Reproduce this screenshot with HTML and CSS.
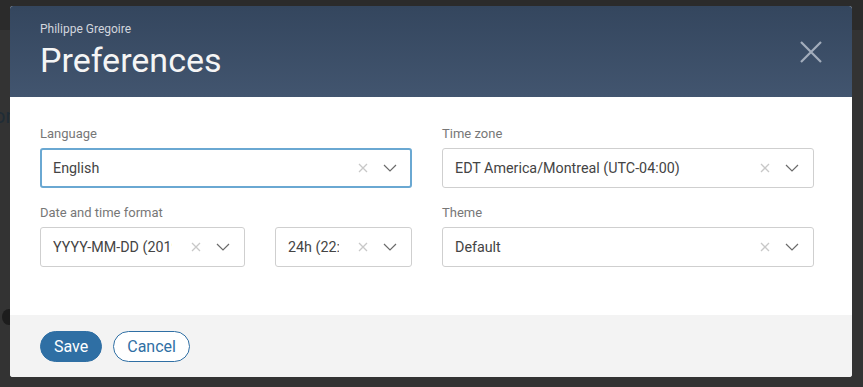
FILE: index.html
```html
<!DOCTYPE html>
<html>
<head>
<meta charset="utf-8">
<link rel="stylesheet" href="styles.css">
</head>
<body>
<div class="page">
  <div class="page-top"></div>
  <span class="bg-text">or</span>
  <span class="bg-dot"></span>
  <div class="modal">
    <header class="modal-header">
      <div class="titles">
        <div class="subtitle">Philippe Gregoire</div>
        <h1 class="title">Preferences</h1>
      </div>
      <button class="close" aria-label="Close">
        <svg width="24" height="24" viewBox="0 0 24 24"><path d="M2 2 L22 22 M22 2 L2 22" stroke="#a3adbc" stroke-width="2.2" fill="none"/></svg>
      </button>
    </header>
    <div class="modal-body">
      <div class="field">
        <label class="label">Language</label>
        <div class="select focused">
          <span class="value">English</span>
          <span class="icons">
            <svg class="clear" width="10" height="10" viewBox="0 0 10 10"><path d="M1 1 L9 9 M9 1 L1 9" stroke="#c8c8c8" stroke-width="1.3"/></svg>
            <svg class="chev" width="14" height="8" viewBox="0 0 14 8"><path d="M1 1 L7 7 L13 1" stroke="#6b6b6b" stroke-width="1.2" fill="none"/></svg>
          </span>
        </div>
      </div>
      <div class="field">
        <label class="label">Time zone</label>
        <div class="select">
          <span class="value">EDT America/Montreal (UTC-04:00)</span>
          <span class="icons">
            <svg class="clear" width="10" height="10" viewBox="0 0 10 10"><path d="M1 1 L9 9 M9 1 L1 9" stroke="#c8c8c8" stroke-width="1.3"/></svg>
            <svg class="chev" width="14" height="8" viewBox="0 0 14 8"><path d="M1 1 L7 7 L13 1" stroke="#6b6b6b" stroke-width="1.2" fill="none"/></svg>
          </span>
        </div>
      </div>
      <div class="field">
        <label class="label">Date and time format</label>
        <div class="pair">
          <div class="select">
            <span class="value">YYYY-MM-DD (2019-10-23)</span>
            <span class="icons">
              <svg class="clear" width="10" height="10" viewBox="0 0 10 10"><path d="M1 1 L9 9 M9 1 L1 9" stroke="#c8c8c8" stroke-width="1.3"/></svg>
              <svg class="chev" width="14" height="8" viewBox="0 0 14 8"><path d="M1 1 L7 7 L13 1" stroke="#6b6b6b" stroke-width="1.2" fill="none"/></svg>
            </span>
          </div>
          <div class="select short">
            <span class="value">24h (22:22)</span>
            <span class="icons">
              <svg class="clear" width="10" height="10" viewBox="0 0 10 10"><path d="M1 1 L9 9 M9 1 L1 9" stroke="#c8c8c8" stroke-width="1.3"/></svg>
              <svg class="chev" width="14" height="8" viewBox="0 0 14 8"><path d="M1 1 L7 7 L13 1" stroke="#6b6b6b" stroke-width="1.2" fill="none"/></svg>
            </span>
          </div>
        </div>
      </div>
      <div class="field">
        <label class="label">Theme</label>
        <div class="select">
          <span class="value">Default</span>
          <span class="icons">
            <svg class="clear" width="10" height="10" viewBox="0 0 10 10"><path d="M1 1 L9 9 M9 1 L1 9" stroke="#c8c8c8" stroke-width="1.3"/></svg>
            <svg class="chev" width="14" height="8" viewBox="0 0 14 8"><path d="M1 1 L7 7 L13 1" stroke="#6b6b6b" stroke-width="1.2" fill="none"/></svg>
          </span>
        </div>
      </div>
    </div>
    <footer class="modal-footer">
      <button class="btn primary">Save</button>
      <button class="btn outline">Cancel</button>
    </footer>
  </div>
</div>
</body>
</html>
```
FILE: styles.css
```css
* { box-sizing: border-box; }
html, body { margin: 0; padding: 0; }
body {
  width: 863px;
  height: 387px;
  overflow: hidden;
  background: #333333;
  font-family: Roboto, "Liberation Sans", sans-serif;
}
.page {
  position: relative;
  width: 863px;
  height: 387px;
  padding: 6px 11px 0 10px;
}
.page-top {
  position: absolute;
  left: 0; top: 0;
  width: 863px;
  height: 30px;
  background: #2b2b2b;
}
.bg-text {
  position: absolute;
  left: -6px;
  top: 104px;
  font-size: 20px;
  color: #1f2c36;
}
.bg-dot {
  position: absolute;
  left: 2px;
  top: 309px;
  width: 14px;
  height: 16px;
  border-radius: 50%;
  background: #1d1d1d;
}
.modal {
  position: relative;
  width: 842px;
  height: 371px;
  background: #fff;
  border-radius: 3px;
  overflow: hidden;
  display: flex;
  flex-direction: column;
}
.modal-header {
  height: 91px;
  background: linear-gradient(#34465e, #42556f);
  display: flex;
  justify-content: space-between;
  padding: 15px 29px 0 30px;
}
.subtitle {
  font-size: 12px;
  color: #d2d6dd;
  line-height: 16px;
}
.title {
  margin: 2px 0 0;
  font-weight: 400;
  font-size: 34px;
  line-height: 42px;
  color: #f5f5f5;
}
.close {
  background: none;
  border: 0;
  padding: 0;
  margin-top: 19px;
  width: 24px;
  height: 24px;
}
.close svg { display: block; }
.modal-body {
  flex: 1;
  display: grid;
  grid-template-columns: 372px 372px;
  column-gap: 30px;
  row-gap: 17px;
  align-content: start;
  padding: 29px 0 0 30px;
}
.label {
  display: block;
  font-size: 13px;
  line-height: 15px;
  color: #777;
  margin-bottom: 7px;
}
.select {
  height: 40px;
  border: 1px solid #cfcfcf;
  border-radius: 3px;
  display: flex;
  align-items: center;
  padding: 0 14px 0 12px;
  background: #fff;
  overflow: hidden;
}
.select.focused {
  border: 2px solid #6aa8d2;
  padding: 0 13px 0 11px;
}
.value {
  flex: 1;
  min-width: 0;
  white-space: nowrap;
  overflow: hidden;
  font-size: 14.3px;
  color: #444;
}
.icons {
  display: flex;
  align-items: center;
  gap: 15px;
  flex: none;
  padding-left: 19px;
}
.icons svg { display: block; }
.pair {
  display: grid;
  grid-template-columns: 205px 137px;
  column-gap: 30px;
}
.modal-footer {
  height: 62px;
  background: #f3f3f3;
  display: flex;
  align-items: center;
  gap: 11px;
  padding: 0 30px;
}
.btn {
  height: 31px;
  border-radius: 16px;
  font-family: Roboto, "Liberation Sans", sans-serif;
  font-size: 16px;
  padding: 0 13px;
  cursor: pointer;
}
.primary {
  background: #2f6fa4;
  border: 1px solid #2f6fa4;
  color: #fff;
}
.outline {
  background: #fff;
  border: 1px solid #2f6fa4;
  color: #2f6fa4;
}
```
